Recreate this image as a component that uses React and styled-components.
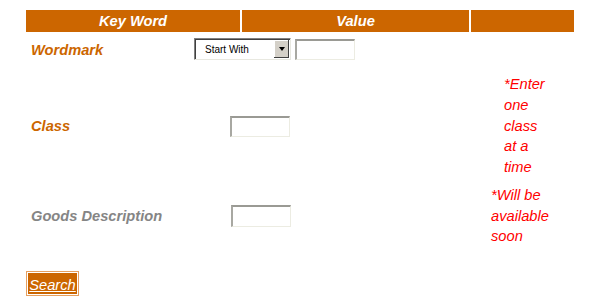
import React from 'react';
import styled, { createGlobalStyle } from 'styled-components';

const GlobalStyle = createGlobalStyle`
    body {
        margin: 0;
        background: #fff;
        font-family: "Liberation Sans", Arial, sans-serif;
    }
`;

export default function App() {
    return (
        <Page>
            <GlobalStyle/>
            <HeaderRow>
                <HeadCell>Key Word</HeadCell>
                <HeadCell>Value</HeadCell>
                <HeadCell/>
            </HeaderRow>
            <Body>
                <Label $drop={2}>Wordmark</Label>
                <ValueCell>
                    <SelectBox>
                        <Select defaultValue="start">
                            <option value="start">Start With</option>
                            <option value="contains">Contains</option>
                            <option value="exact">Exact</option>
                        </Select>
                        <Arrow><Tri/></Arrow>
                    </SelectBox>
                    <Input type="text" name="wordmark"/>
                </ValueCell>
                <Note/>

                <Label>Class</Label>
                <ValueCell $indent={36}>
                    <Input type="text" name="class"/>
                </ValueCell>
                <Note $indent={33} $width={44}>*Enter one class at a time</Note>

                <Label $muted>Goods Description</Label>
                <ValueCell $indent={37}>
                    <Input type="text" name="goods" $height={22}/>
                </ValueCell>
                <Note $indent={20} $width={70}>*Will be available soon</Note>
            </Body>
            <SearchButton type="submit">Search</SearchButton>
        </Page>
    );
}

const Page = styled.div`
    padding: 10px 0 0 26px;
    width: 548px;
`

const HeaderRow = styled.div`
    display: grid;
    grid-template-columns: 214px 227px 103px;
    column-gap: 2px;
    height: 22px;
`

const HeadCell = styled.div`
    background: #cc6600;
    color: #fff;
    font-weight: bold;
    font-style: italic;
    font-size: 11pt;
    line-height: 22px;
    text-align: center;
`

const Body = styled.div`
    display: grid;
    grid-template-columns: 168px 277px 103px;
    grid-template-rows: 30px 120px 56px;
    row-gap: 2px;
    margin-top: 2px;
    align-items: center;
`

const Label = styled.div`
    padding-left: 5px;
    padding-top: ${p => p.$drop || 0}px;
    font-weight: bold;
    font-style: italic;
    font-size: 11pt;
    color: ${p => p.$muted ? '#858585' : '#cc6600'};
`

const ValueCell = styled.div`
    display: flex;
    align-items: center;
    gap: 4px;
    padding-left: ${p => p.$indent || 0}px;
`

const SelectBox = styled.div`
    position: relative;
    width: 97px;
    height: 22px;
    box-sizing: border-box;
    border-top: 1px solid #808080;
    border-left: 1px solid #808080;
    border-right: 1px solid #e8e8e0;
    border-bottom: 1px solid #e8e8e0;
    box-shadow: inset 1px 1px 0 #404040;
    background: #fff;
`

const Select = styled.select`
    appearance: none;
    border: none;
    outline: none;
    background: transparent;
    width: 100%;
    height: 100%;
    padding: 0 0 0 10px;
    font-family: "Liberation Sans", Arial, sans-serif;
    font-size: 10px;
    color: #000;
`

const Arrow = styled.span`
    position: absolute;
    right: 1px;
    top: 1px;
    bottom: 1px;
    width: 15px;
    background: #d4d0c8;
    box-shadow: inset -1px -1px 0 #404040, inset 1px 1px 0 #fff;
    display: flex;
    align-items: center;
    justify-content: center;
    pointer-events: none;
`

const Tri = styled.span`
    width: 0;
    height: 0;
    border-left: 3.5px solid transparent;
    border-right: 3.5px solid transparent;
    border-top: 4px solid #000;
`

const Input = styled.input`
    width: 60px;
    height: ${p => p.$height || 21}px;
    box-sizing: border-box;
    margin: 0;
    padding: 0 2px;
    background: #fff;
    border-top: 2px solid #9a9a94;
    border-left: 2px solid #a8a8a2;
    border-right: 1px solid #ecece2;
    border-bottom: 1px solid #ecece2;
    font-size: 12px;
`

const Note = styled.div`
    padding-left: ${p => p.$indent || 0}px;
    width: ${p => p.$width || 60}px;
    color: #ff0000;
    font-style: italic;
    font-size: 11pt;
    line-height: 20.7px;
`

const SearchButton = styled.button`
    margin-top: 27px;
    display: block;
    width: 53px;
    height: 25px;
    padding: 2px 0 0;
    background: #cc6600;
    border: 1px solid #e6a060;
    box-shadow: inset 0 0 0 1px #fff;
    color: #fff;
    font-family: "Liberation Sans", Arial, sans-serif;
    font-style: italic;
    font-size: 11pt;
    text-decoration: underline;
    cursor: pointer;
`
